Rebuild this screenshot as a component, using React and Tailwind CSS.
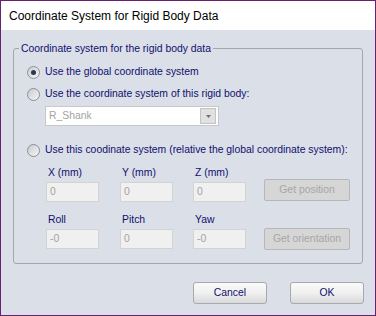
const FONT = { fontFamily: '"Liberation Sans", Arial, sans-serif' };

function Radio({ checked, label }) {
  return (
    <div className="flex h-[22px] items-center whitespace-nowrap">
      <div className="ml-[13px] flex h-[13px] w-[13px] items-center justify-center rounded-full border border-[#8d9196] bg-gradient-to-br from-[#c9cbce] to-[#f6f6f6]">
        {checked && <div className="h-[5px] w-[5px] rounded-full bg-[#2c3a4e]" />}
      </div>
      <span className="ml-[5px]">{label}</span>
    </div>
  );
}

function Field({ label, value }) {
  return (
    <div className="flex w-[53px] flex-col">
      <div className="h-[14px] pl-[2px] leading-[14px]">{label}</div>
      <div className="mt-[2px] flex h-[20px] items-center border border-[#d3d3d3] bg-[#f0f0f0] pl-[3px] text-[#a3a3a3]">
        {value}
      </div>
    </div>
  );
}

function DisabledButton({ children }) {
  return (
    <div className="flex h-[22px] w-[86px] items-center justify-center rounded-[2px] border border-[#b5b7ba] bg-[#d6d6d6] text-[#a7a7a7]">
      {children}
    </div>
  );
}

function DialogButton({ children }) {
  return (
    <div className="flex h-[22px] w-[74px] items-center justify-center rounded-[3px] border border-[#a7a9ac] bg-gradient-to-b from-[#fafafa] via-[#f0f0f0] to-[#d8d9dc] text-[#10106e]">
      {children}
    </div>
  );
}

export default function App() {
  return (
    <div className="flex h-[316px] w-[376px] flex-col border border-[#6b1f70] bg-[#dbdfe8] text-[10.4px] text-[#10106e]" style={FONT}>
      <div className="flex h-[29px] items-center bg-white pl-[8px] text-[12px] text-black">
        Coordinate System for Rigid Body Data
      </div>

      <fieldset className="mx-[12px] mt-[12px] h-[222px] rounded-[3px] border border-[#a3a7ad] pt-[6px]">
        <legend className="ml-[5px] px-[2px] leading-[13px]">Coordinate system for the rigid body data</legend>
        <Radio checked label="Use the global coordinate system" />
        <Radio label="Use the coordinate system of this rigid body:" />
        <div className="ml-[31px] mt-[1px] flex h-[20px] w-[174px] items-center justify-between border border-[#c6c8cc] bg-white pl-[3px] pr-[2px]">
          <span className="text-[#a3a3a3]">R_Shank</span>
          <div className="flex h-[16px] w-[16px] items-center justify-center border border-[#c4c4c4] bg-[#e1e1e1]">
            <svg width="5" height="3" viewBox="0 0 5 3">
              <path d="M0 0h5L2.5 3z" fill="#707070" />
            </svg>
          </div>
        </div>
        <div className="mt-[13px]">
          <Radio label="Use this coodinate system (relative the global coordinate system):" />
        </div>
        <div className="ml-[32px] mt-[5px] flex items-end">
          <Field label="X (mm)" value="0" />
          <div className="ml-[21px]"><Field label="Y (mm)" value="0" /></div>
          <div className="ml-[20px]"><Field label="Z (mm)" value="0" /></div>
          <div className="mb-[1px] ml-[18px]"><DisabledButton>Get position</DisabledButton></div>
        </div>
        <div className="ml-[32px] mt-[11px] flex items-end">
          <Field label="Roll" value="-0" />
          <div className="ml-[21px]"><Field label="Pitch" value="0" /></div>
          <div className="ml-[20px]"><Field label="Yaw" value="-0" /></div>
          <div className="-mb-[1px] ml-[18px]"><DisabledButton>Get orientation</DisabledButton></div>
        </div>
      </fieldset>

      <div className="mr-[11px] mt-[18px] flex justify-end gap-[23px]">
        <DialogButton>Cancel</DialogButton>
        <DialogButton>OK</DialogButton>
      </div>
    </div>
  );
}
